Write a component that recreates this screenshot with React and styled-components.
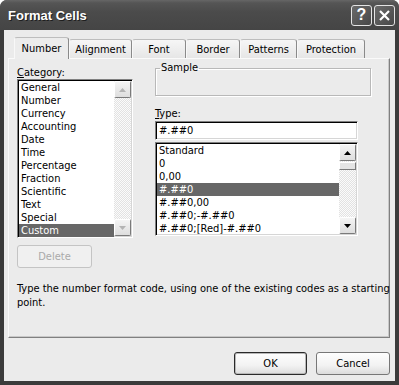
import React from 'react'
import styled, { createGlobalStyle } from 'styled-components'

const GlobalStyle = createGlobalStyle`
  html, body {
    margin: 0;
    padding: 0;
    background: #fff;
  }
  body {
    font-family: "DejaVu Sans Condensed", "DejaVu Sans", Tahoma, sans-serif;
    font-size: 11px;
    color: #000;
  }
  * { box-sizing: border-box; }
`

const Window = styled.div`
  width: 399px;
  height: 385px;
  display: flex;
  flex-direction: column;
  background: #3b3b3b;
  border-radius: 7px 7px 0 0;
  overflow: hidden;
`

const TitleBar = styled.div`
  height: 30px;
  flex: none;
  display: flex;
  align-items: center;
  gap: 2px;
  padding: 0 4px 0 8px;
  background: linear-gradient(#666 0, #555 3px, #4b4b4b 40%, #454545 100%);
`

const Title = styled.div`
  flex: 1;
  color: #fff;
  font: bold 13px "Liberation Sans", Arial, sans-serif;
  text-shadow: 1px 1px 0 #1e1e1e;
`

const CaptionButton = styled.div`
  width: 21px;
  height: 21px;
  display: flex;
  align-items: center;
  justify-content: center;
  border: 1px solid #e4e4e4;
  border-radius: 3px;
  background: linear-gradient(135deg, #6a6a6a, #484848);
  color: #fff;
  font: bold 16px "Liberation Sans", Arial, sans-serif;
`

const Body = styled.div`
  flex: 1;
  margin: 0 4px 4px;
  background: #ebebeb;
  display: flex;
  flex-direction: column;
  padding: 7px 5px 6px 4px;
`

const TabRow = styled.div`
  display: flex;
  align-items: flex-end;
  height: 21px;
  padding-left: 6px;
`

const Tab = styled.div`
  height: ${p => (p.$active ? 22 : 19)}px;
  width: ${p => p.$w}px;
  margin-bottom: ${p => (p.$active ? -1 : 0)}px;
  display: flex;
  align-items: center;
  justify-content: center;
  padding-top: ${p => (p.$active ? 0 : 1)}px;
  background: ${p => (p.$active ? '#ececec' : 'linear-gradient(#f6f6f6, #e6e6e6)')};
  border: 1px solid;
  border-bottom: none;
  border-color: #bdbdbd #8a8a8a transparent #f8f8f8;
  border-radius: 3px 3px 0 0;
  position: relative;
  z-index: ${p => (p.$active ? 2 : 1)};
`

const Panel = styled.div`
  height: 280px;
  flex: none;
  border: 1px solid;
  border-color: #fafafa #808080 #808080 #fafafa;
  box-shadow: inset -1px -1px 0 #c8c8c8;
  display: grid;
  grid-template-columns: 116px 216px 1fr;
  column-gap: 22px;
  grid-template-rows: auto 1fr;
  padding: 0 0 0 8px;
`

const LeftCol = styled.div`
  display: flex;
  flex-direction: column;
  padding-top: 7px;
`

const RightCol = styled.div`
  display: flex;
  flex-direction: column;
  padding-top: 3px;
`

const Label = styled.div`
  height: 13px;
  line-height: 13px;
  margin-bottom: ${p => p.$mb || 0}px;
  u { text-decoration: underline; }
`

const ListBox = styled.div`
  width: ${p => p.$w}px;
  height: ${p => p.$h}px;
  border: 1px solid;
  border-color: #808080 #fff #fff #808080;
  box-shadow: inset 1px 1px 0 #000, inset -1px -1px 0 #d6d6d6;
  background: #fff;
  display: flex;
  padding: 1px 1px 0 1px;
  overflow: hidden;
`

const Items = styled.div`
  flex: 1;
  display: flex;
  flex-direction: column;
`

const Item = styled.div`
  height: 13px;
  flex: none;
  line-height: 13px;
  padding-left: 2px;
  white-space: nowrap;
  background: ${p => (p.$sel ? '#676767' : 'transparent')};
  color: ${p => (p.$sel ? '#fff' : '#000')};
`

const ScrollBar = styled.div`
  width: 17px;
  margin-bottom: 1px;
  display: flex;
  flex-direction: column;
  background: repeating-conic-gradient(#fbfbfb 0 25%, #e2e2e2 0 50%) 0 0 / 2px 2px;
`

const ScrollBtn = styled.div`
  height: 17px;
  flex: none;
  display: flex;
  align-items: center;
  justify-content: center;
  background: linear-gradient(#f4f4f4, #dedede);
  border: 1px solid;
  border-color: #fff #7a7a7a #7a7a7a #fff;
  border-radius: 2px;
  color: ${p => (p.$disabled ? '#b4b4b4' : '#000')};
`

const Thumb = styled.div`
  height: 8px;
  margin-top: 1px;
  flex: none;
  background: #e4e4e4;
  border: 1px solid;
  border-color: #fff #7a7a7a #7a7a7a #fff;
`

const Track = styled.div`
  flex: 1;
`

const Arrow = ({ down }) => (
  <svg width="7" height="4" viewBox="0 0 7 4">
    <path d={down ? 'M0 0h7L3.5 4z' : 'M3.5 0L7 4H0z'} fill="currentColor" />
  </svg>
)

const Button = styled.div`
  width: ${p => p.$w}px;
  height: 23px;
  display: flex;
  align-items: center;
  justify-content: center;
  border: 1px solid ${p => (p.$default ? '#2a2a2a' : p.$disabled ? '#c4c4c4' : '#777')};
  border-radius: 3px;
  background: ${p => (p.$disabled ? '#f0f0f0' : 'linear-gradient(#fefefe, #f2f2f2 60%, #dcdcdc)')};
  color: ${p => (p.$disabled ? '#aaa' : '#000')};
  box-shadow: ${p => (p.$default ? 'inset 0 0 0 1px #b8b8b8' : 'none')};
`

const Spacer = styled.div`
  height: ${p => p.$h}px;
  flex: none;
`

const GroupBox = styled.fieldset`
  margin: 0 0 11px;
  padding: 0;
  height: 34px;
  width: 216px;
  border: 1px solid #b8b8b8;
  box-shadow: inset 1px 1px 0 #fff, 1px 1px 0 #fff;
  legend {
    padding: 0 1px;
    margin-left: 4px;
    line-height: 12px;
  }
`

const TextInput = styled.div`
  width: 203px;
  height: 19px;
  border: 1px solid;
  border-color: #808080 #fff #fff #808080;
  box-shadow: inset 1px 1px 0 #000, inset -1px -1px 0 #d6d6d6;
  background: #fff;
  padding: 2px 3px;
  line-height: 13px;
  margin-bottom: 2px;
`

const Description = styled.div`
  grid-column: 1 / -1;
  padding-top: 14px;
  line-height: 14px;
  white-space: nowrap;
`

const Footer = styled.div`
  display: flex;
  justify-content: flex-end;
  gap: 9px;
  margin-top: 14px;
`

const categories = ['General', 'Number', 'Currency', 'Accounting', 'Date', 'Time', 'Percentage', 'Fraction', 'Scientific', 'Text', 'Special', 'Custom']
const types = ['Standard', '0', '0,00', '#.##0', '#.##0,00', '#.##0;-#.##0', '#.##0;[Red]-#.##0']
const tabs = [['Number', 55], ['Alignment', 63], ['Font', 54], ['Border', 54], ['Patterns', 57], ['Protection', 68]]

const App = () => (
  <>
    <GlobalStyle />
    <Window>
      <TitleBar>
        <Title>Format Cells</Title>
        <CaptionButton>?</CaptionButton>
        <CaptionButton>
          <svg width="11" height="11" viewBox="0 0 11 11">
            <path d="M1 1l9 9M10 1l-9 9" stroke="#fff" strokeWidth="2.2" />
          </svg>
        </CaptionButton>
      </TitleBar>
      <Body>
        <TabRow>
          {tabs.map(([t, w], i) => (
            <Tab key={t} $w={w} $active={i === 0}>{t}</Tab>
          ))}
        </TabRow>
        <Panel>
          <LeftCol>
            <Label><u>C</u>ategory:</Label>
            <ListBox $w={116} $h={159}>
              <Items>
                {categories.map(c => (
                  <Item key={c} $sel={c === 'Custom'}>{c}</Item>
                ))}
              </Items>
              <ScrollBar>
                <ScrollBtn $disabled><Arrow /></ScrollBtn>
                <Track />
                <ScrollBtn $disabled><Arrow down /></ScrollBtn>
              </ScrollBar>
            </ListBox>
            <Spacer $h={7} />
            <Button $w={75} $disabled>Delete</Button>
          </LeftCol>
          <RightCol>
            <GroupBox>
              <legend>Sample</legend>
            </GroupBox>
            <Label $mb={1}><u>T</u>ype:</Label>
            <TextInput>#.##0</TextInput>
            <ListBox $w={203} $h={94}>
              <Items>
                {types.map(t => (
                  <Item key={t} $sel={t === '#.##0'}>{t}</Item>
                ))}
              </Items>
              <ScrollBar>
                <ScrollBtn><Arrow /></ScrollBtn>
                <Thumb />
                <Track />
                <ScrollBtn><Arrow down /></ScrollBtn>
              </ScrollBar>
            </ListBox>
          </RightCol>
          <Description>
            Type the number format code, using one of the existing codes as a starting<br />point.
          </Description>
        </Panel>
        <Footer>
          <Button $w={73} $default>OK</Button>
          <Button $w={74}>Cancel</Button>
        </Footer>
      </Body>
    </Window>
  </>
)

export default App
